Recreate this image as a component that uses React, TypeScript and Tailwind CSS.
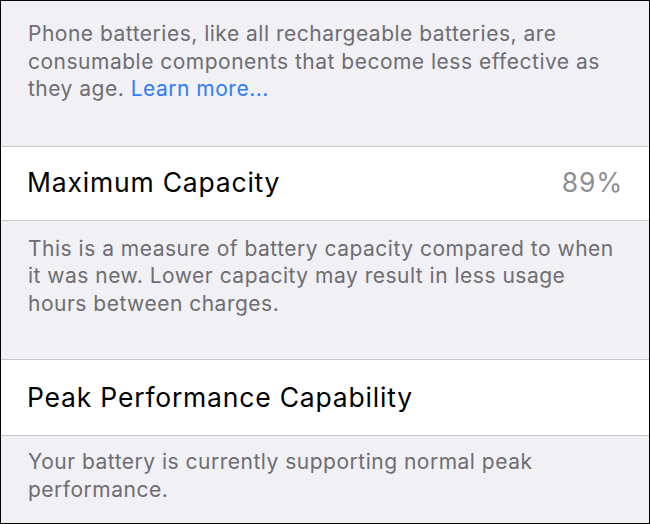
import React from 'react';

function Footer({ children, className = '' }: { children: React.ReactNode; className?: string }) {
  return (
    <div className={`pl-[27px] pr-[20px] text-[21px] leading-[27.5px] tracking-[0.5px] text-[#6d6d72] ${className}`}>
      {children}
    </div>
  );
}

function Row({ label, value, className = '' }: { label: string; value?: string; className?: string }) {
  return (
    <div
      className={`flex items-center justify-between border-y border-[#c8c7cc] bg-white pl-[26px] pr-[26px] ${className}`}
    >
      <span className="text-[26.5px] tracking-[0.8px] text-black">{label}</span>
      {value && <span className="text-[26.5px] tracking-[0.8px] text-[#8e8e93]">{value}</span>}
    </div>
  );
}

export default function App() {
  return (
    <div
      className="h-[524px] w-[650px] overflow-hidden border border-black bg-[#f1f0f5]"
      style={{ fontFamily: 'Inter, "Noto Sans", sans-serif' }}
    >
      <Footer className="pt-[19px] pb-[43px]">
        Phone batteries, like all rechargeable batteries, are
        <br />
        consumable components that become less effective as
        <br />
        they age. <span className="text-[#2f7cf6]">Learn more...</span>
      </Footer>
      <Row label="Maximum Capacity" value="89%" className="h-[75px]" />
      <Footer className="pt-[14px] pb-[42px]">
        This is a measure of battery capacity compared to when
        <br />
        it was new. Lower capacity may result in less usage
        <br />
        hours between charges.
      </Footer>
      <Row label="Peak Performance Capability" className="h-[77px]" />
      <Footer className="pt-[12px]">
        Your battery is currently supporting normal peak
        <br />
        performance.
      </Footer>
    </div>
  );
}
